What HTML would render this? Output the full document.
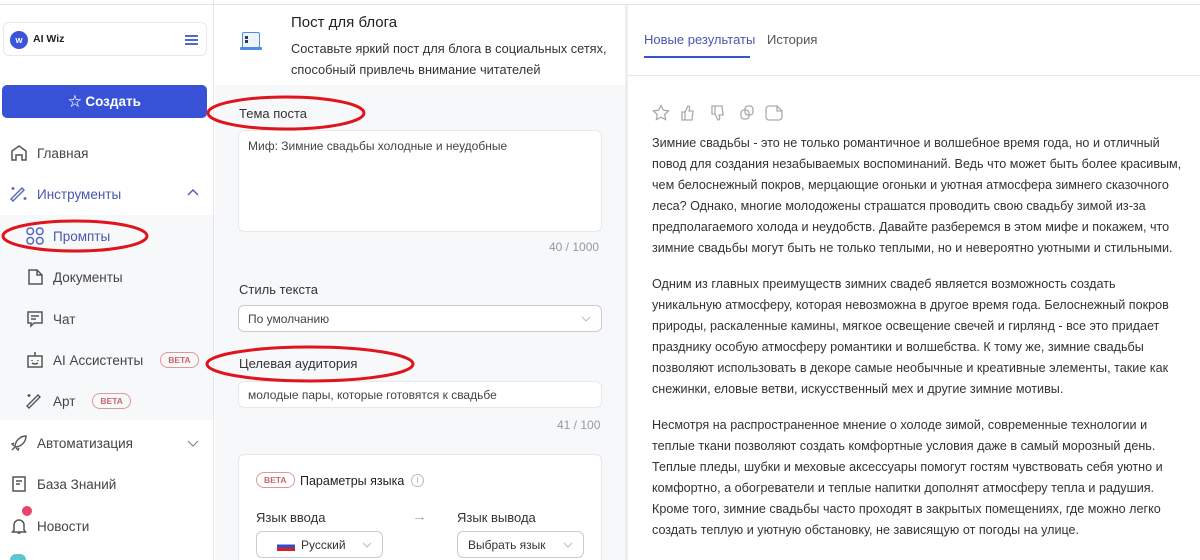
<!DOCTYPE html>
<html style="width:1200px;height:560px;overflow:hidden"><head><meta charset="utf-8"><style>
*{box-sizing:border-box;margin:0;padding:0}
body{width:1200px;height:560px;overflow:hidden;background:#fff;font-family:"Liberation Sans","Noto Sans CJK SC",sans-serif;color:#333;position:relative}
.a{position:absolute}
.nav{position:absolute;left:10px;font-size:13.5px;color:#444;display:flex;align-items:center;gap:9px}
.sub{left:26px}
.beta{display:inline-block;border:1px solid #d99;color:#c66;border-radius:10px;font-size:8.5px;font-weight:bold;padding:2px 7px;margin-left:8px}
.lbl{position:absolute;left:239px;font-size:13px;color:#333}
.box{position:absolute;left:238px;width:364px;background:#fff;border:1px solid #e6e8ec;border-radius:6px;font-size:12px;color:#444;padding:8px 9px}
.cnt{position:absolute;font-size:12px;color:#999}
.rt{position:absolute;left:652px;width:530px;font-size:12.6px;line-height:21px;color:#333}
.chev{position:absolute}
</style></head><body>
<div class="a" style="left:0;top:0;width:214px;height:560px;background:#fff;border-right:1px solid #e8e8e8"></div>
<div class="a" style="left:0;top:4px;width:1200px;height:1px;background:#e4e4e4"></div>
<div class="a" style="left:3px;top:22px;width:204px;height:34px;border:1px solid #e8e8e8;border-radius:6px"></div>
<div class="a" style="left:10px;top:31px;width:18px;height:18px;border-radius:50%;background:#3a55d8;color:#fff;font-size:9px;font-weight:bold;text-align:center;line-height:18px">w</div>
<div class="a" style="left:33px;top:33px;font-size:10.5px;font-weight:bold;color:#222">AI Wiz</div>
<div class="a" style="left:185px;top:35px;width:13px;height:2px;background:#5566cc;box-shadow:0 4px 0 #5566cc,0 8px 0 #5566cc"></div>
<div class="a" style="left:2px;top:85px;width:205px;height:33px;background:#3752d6;border-radius:5px;color:#fff;font-weight:bold;font-size:13.5px;text-align:center;line-height:33px">☆ Создать</div>
<div class="nav" style="top:144px"><svg width="18" height="18" viewBox="0 0 18 18" fill="none" stroke="#555" stroke-width="1.5"><path d="M2 16V7l7-5 7 5v9h-4v-5H6v5z"/></svg>Главная</div>
<div class="nav" style="top:185px;color:#4a55b0"><svg width="18" height="18" viewBox="0 0 18 18" fill="none" stroke="#5566bb" stroke-width="1.4"><path d="M3 16L14 5l-2-2L1 14zM3 2v3M1.5 3.5h3M15 12v3M13.5 13.5h3"/></svg>Инструменты</div>
<svg class="chev" style="left:187px;top:189px" width="12" height="8" viewBox="0 0 12 8" fill="none" stroke="#4a55b0" stroke-width="1.4"><path d="M1 6l5-5 5 5"/></svg>
<div class="a" style="left:0;top:215px;width:213px;height:205px;background:#f7f8fa"></div>
<div class="nav sub" style="top:227px;color:#4a55b0"><svg width="18" height="18" viewBox="0 0 18 18" fill="none" stroke="#5566bb" stroke-width="1.5"><rect x="1" y="1" width="6.5" height="6.5" rx="3"/><rect x="10.5" y="1" width="6.5" height="6.5" rx="3"/><rect x="1" y="10.5" width="6.5" height="6.5" rx="3"/><rect x="10.5" y="10.5" width="6.5" height="6.5" rx="3"/></svg>Промпты</div>
<div class="nav sub" style="top:268px"><svg width="18" height="18" viewBox="0 0 18 18" fill="none" stroke="#555" stroke-width="1.5"><path d="M3 2h8l5 5v9H3zM11 2v5h5"/></svg>Документы</div>
<div class="nav sub" style="top:310px"><svg width="18" height="18" viewBox="0 0 18 18" fill="none" stroke="#555" stroke-width="1.5"><path d="M2 2h14v11H8l-3 3v-3H2zM5 6h8M5 9h5"/></svg>Чат</div>
<div class="nav sub" style="top:351px"><svg width="18" height="18" viewBox="0 0 18 18" fill="none" stroke="#555" stroke-width="1.5"><path d="M2 5h14v11H2zM9 1v4M6 9v1M12 9v1M6 12q3 2 6 0"/></svg>AI Ассистенты<span class="beta">BETA</span></div>
<div class="nav sub" style="top:392px"><svg width="18" height="18" viewBox="0 0 18 18" fill="none" stroke="#555" stroke-width="1.4"><path d="M3 16L14 5l-2-2L1 14zM3 2v3M1.5 3.5h3"/></svg>Арт<span class="beta">BETA</span></div>
<div class="nav" style="top:434px"><svg width="18" height="18" viewBox="0 0 18 18" fill="none" stroke="#555" stroke-width="1.4"><path d="M5 13C5 7 10 2 16 2c0 6-5 11-11 11zM5 13l-3 3M4 9l-2 1 2 2M9 14l-1 2-2-2"/></svg>Автоматизация</div>
<svg class="chev" style="left:187px;top:439px" width="12" height="8" viewBox="0 0 12 8" fill="none" stroke="#888" stroke-width="1.2"><path d="M1 2l5 5 5-5"/></svg>
<div class="nav" style="top:475px"><svg width="18" height="18" viewBox="0 0 18 18" fill="none" stroke="#555" stroke-width="1.5"><path d="M3 2h12v14H3zM6 6h6M6 9h4"/></svg>База Знаний</div>
<div class="nav" style="top:517px"><svg width="18" height="18" viewBox="0 0 18 18" fill="none" stroke="#555" stroke-width="1.5"><path d="M4 13V8a5 5 0 0110 0v5l1.5 2h-13zM7.5 16h3"/></svg>Новости</div>
<div class="a" style="left:22px;top:506px;width:10px;height:10px;border-radius:50%;background:#e8456a"></div>
<div class="a" style="left:10px;top:554px;width:16px;height:6px;border-radius:8px 8px 0 0;background:#5cc8cc"></div>
<div class="a" style="left:215px;top:5px;width:410px;height:555px;background:#f7f8fa"></div>
<div class="a" style="left:215px;top:5px;width:410px;height:80px;background:#fff"></div>
<div class="a" style="left:625px;top:5px;width:3px;height:555px;background:#eceef1"></div>
<div class="a" style="left:242px;top:32px;width:18px;height:16px;border:1.5px solid #4a8ee0;border-radius:2px;background:#eef4fc"></div>
<div class="a" style="left:245px;top:36px;width:3px;height:3px;background:#335;box-shadow:0 4px 0 #335"></div>
<div class="a" style="left:240px;top:47px;width:22px;height:3px;background:#4a8ee0;border-radius:1px"></div>
<div class="a" style="left:291px;top:14px;font-size:15px;color:#222">Пост для блога</div>
<div class="a" style="left:291px;top:38px;font-size:12.8px;line-height:21px;color:#333;width:320px">Составьте яркий пост для блога в социальных сетях, способный привлечь внимание читателей</div>
<div class="lbl" style="top:106px">Тема поста</div>
<div class="box" style="top:130px;height:102px">Миф: Зимние свадьбы холодные и неудобные</div>
<div class="cnt" style="left:549px;top:240px">40 / 1000</div>
<div class="lbl" style="top:282px">Стиль текста</div>
<div class="box" style="top:305px;height:27px;padding:6px 9px;border-color:#c9ccd2">По умолчанию<svg style="position:absolute;right:10px;top:10px" width="10" height="6" viewBox="0 0 10 6" fill="none" stroke="#bbb"><path d="M1 1l4 4 4-4"/></svg></div>
<div class="lbl" style="top:356px">Целевая аудитория</div>
<div class="box" style="top:381px;height:27px;padding:6px 9px">молодые пары, которые готовятся к свадьбе</div>
<div class="cnt" style="left:557px;top:418px">41 / 100</div>
<div class="a" style="left:238px;top:454px;width:364px;height:120px;background:#fff;border:1px solid #e6e8ec;border-radius:6px"></div>
<div class="a" style="left:256px;top:472px;border:1px solid #d99;color:#c66;border-radius:10px;font-size:8.5px;font-weight:bold;padding:2px 7px">BETA</div>
<div class="a" style="left:300px;top:474px;font-size:12.5px;color:#222">Параметры языка</div>
<div class="a" style="left:411px;top:474px;width:13px;height:13px;border:1px solid #bbb;border-radius:50%;font-size:9px;color:#aaa;text-align:center;line-height:11px">i</div>
<div class="a" style="left:256px;top:510px;font-size:13px;color:#333">Язык ввода</div>
<div class="a" style="left:412px;top:508px;font-size:15px;color:#aaa">→</div>
<div class="a" style="left:457px;top:510px;font-size:13px;color:#333">Язык вывода</div>
<div class="a" style="left:256px;top:531px;width:127px;height:27px;border:1px solid #c9ccd2;border-radius:6px;font-size:12px;padding:6px 0 0 44px">Русский<span style="position:absolute;left:20px;top:9px;width:18px;height:10px;background:linear-gradient(#fff 33%,#2a4fd0 33% 66%,#d0202a 66%)"></span><svg style="position:absolute;right:10px;top:10px" width="10" height="6" viewBox="0 0 10 6" fill="none" stroke="#bbb"><path d="M1 1l4 4 4-4"/></svg></div>
<div class="a" style="left:457px;top:531px;width:127px;height:27px;border:1px solid #c9ccd2;border-radius:6px;font-size:12px;padding:6px 0 0 10px">Выбрать язык<svg style="position:absolute;right:10px;top:10px" width="10" height="6" viewBox="0 0 10 6" fill="none" stroke="#bbb"><path d="M1 1l4 4 4-4"/></svg></div>
<div class="a" style="left:644px;top:32px;font-size:13px;color:#4a55b0">Новые результаты</div>
<div class="a" style="left:767px;top:32px;font-size:13px;color:#555">История</div>
<div class="a" style="left:644px;top:56px;width:106px;height:2px;background:#3752d6"></div>
<div class="a" style="left:628px;top:75px;width:572px;height:1px;background:#e8e8e8"></div>
<svg class="a" style="left:652px;top:104px" width="140" height="18" viewBox="0 0 140 18" fill="none" stroke="#aaa" stroke-width="1.3"><path d="M9 1.5l2.3 4.7 5.2.7-3.8 3.6.9 5.1L9 13.2l-4.6 2.4.9-5.1L1.5 6.9l5.2-.7z"/><path d="M30 8h3v8h-3zM33 8l3-6c1.5 0 2 1 1.5 3l-.5 2h4l-1 9h-7"/><path d="M60 10h3V2h-3zM63 10l3 6c1.5 0 2-1 1.5-3l-.5-2h4l-1-9h-7"/><rect x="89" y="6" width="8" height="9" rx="3"/><rect x="93" y="2" width="8" height="9" rx="3"/><path d="M117 2h8l5 5v6a3 3 0 01-3 3h-10a3 3 0 01-3-3V5a3 3 0 013-3zM125 2v5h5"/></svg>
<div class="rt" style="top:133px">Зимние свадьбы - это не только романтичное и волшебное время года, но и отличный повод для создания незабываемых воспоминаний. Ведь что может быть более красивым, чем белоснежный покров, мерцающие огоньки и уютная атмосфера зимнего сказочного леса? Однако, многие молодожены страшатся проводить свою свадьбу зимой из-за предполагаемого холода и неудобств. Давайте разберемся в этом мифе и покажем, что зимние свадьбы могут быть не только теплыми, но и невероятно уютными и стильными.</div>
<div class="rt" style="top:274px">Одним из главных преимуществ зимних свадеб является возможность создать уникальную атмосферу, которая невозможна в другое время года. Белоснежный покров природы, раскаленные камины, мягкое освещение свечей и гирлянд - все это придает празднику особую атмосферу романтики и волшебства. К тому же, зимние свадьбы позволяют использовать в декоре самые необычные и креативные элементы, такие как снежинки, еловые ветви, искусственный мех и другие зимние мотивы.</div>
<div class="rt" style="top:415px">Несмотря на распространенное мнение о холоде зимой, современные технологии и теплые ткани позволяют создать комфортные условия даже в самый морозный день. Теплые пледы, шубки и меховые аксессуары помогут гостям чувствовать себя уютно и комфортно, а обогреватели и теплые напитки дополнят атмосферу тепла и радушия. Кроме того, зимние свадьбы часто проходят в закрытых помещениях, где можно легко создать теплую и уютную обстановку, не зависящую от погоды на улице.</div>
<svg class="a" style="left:0;top:0" width="1200" height="560" fill="none" stroke="#e0141c" stroke-width="3"><ellipse cx="286" cy="113" rx="78" ry="16"/><ellipse cx="75" cy="236" rx="72" ry="15"/><ellipse cx="310" cy="364" rx="103" ry="17"/></svg>
</body></html>
